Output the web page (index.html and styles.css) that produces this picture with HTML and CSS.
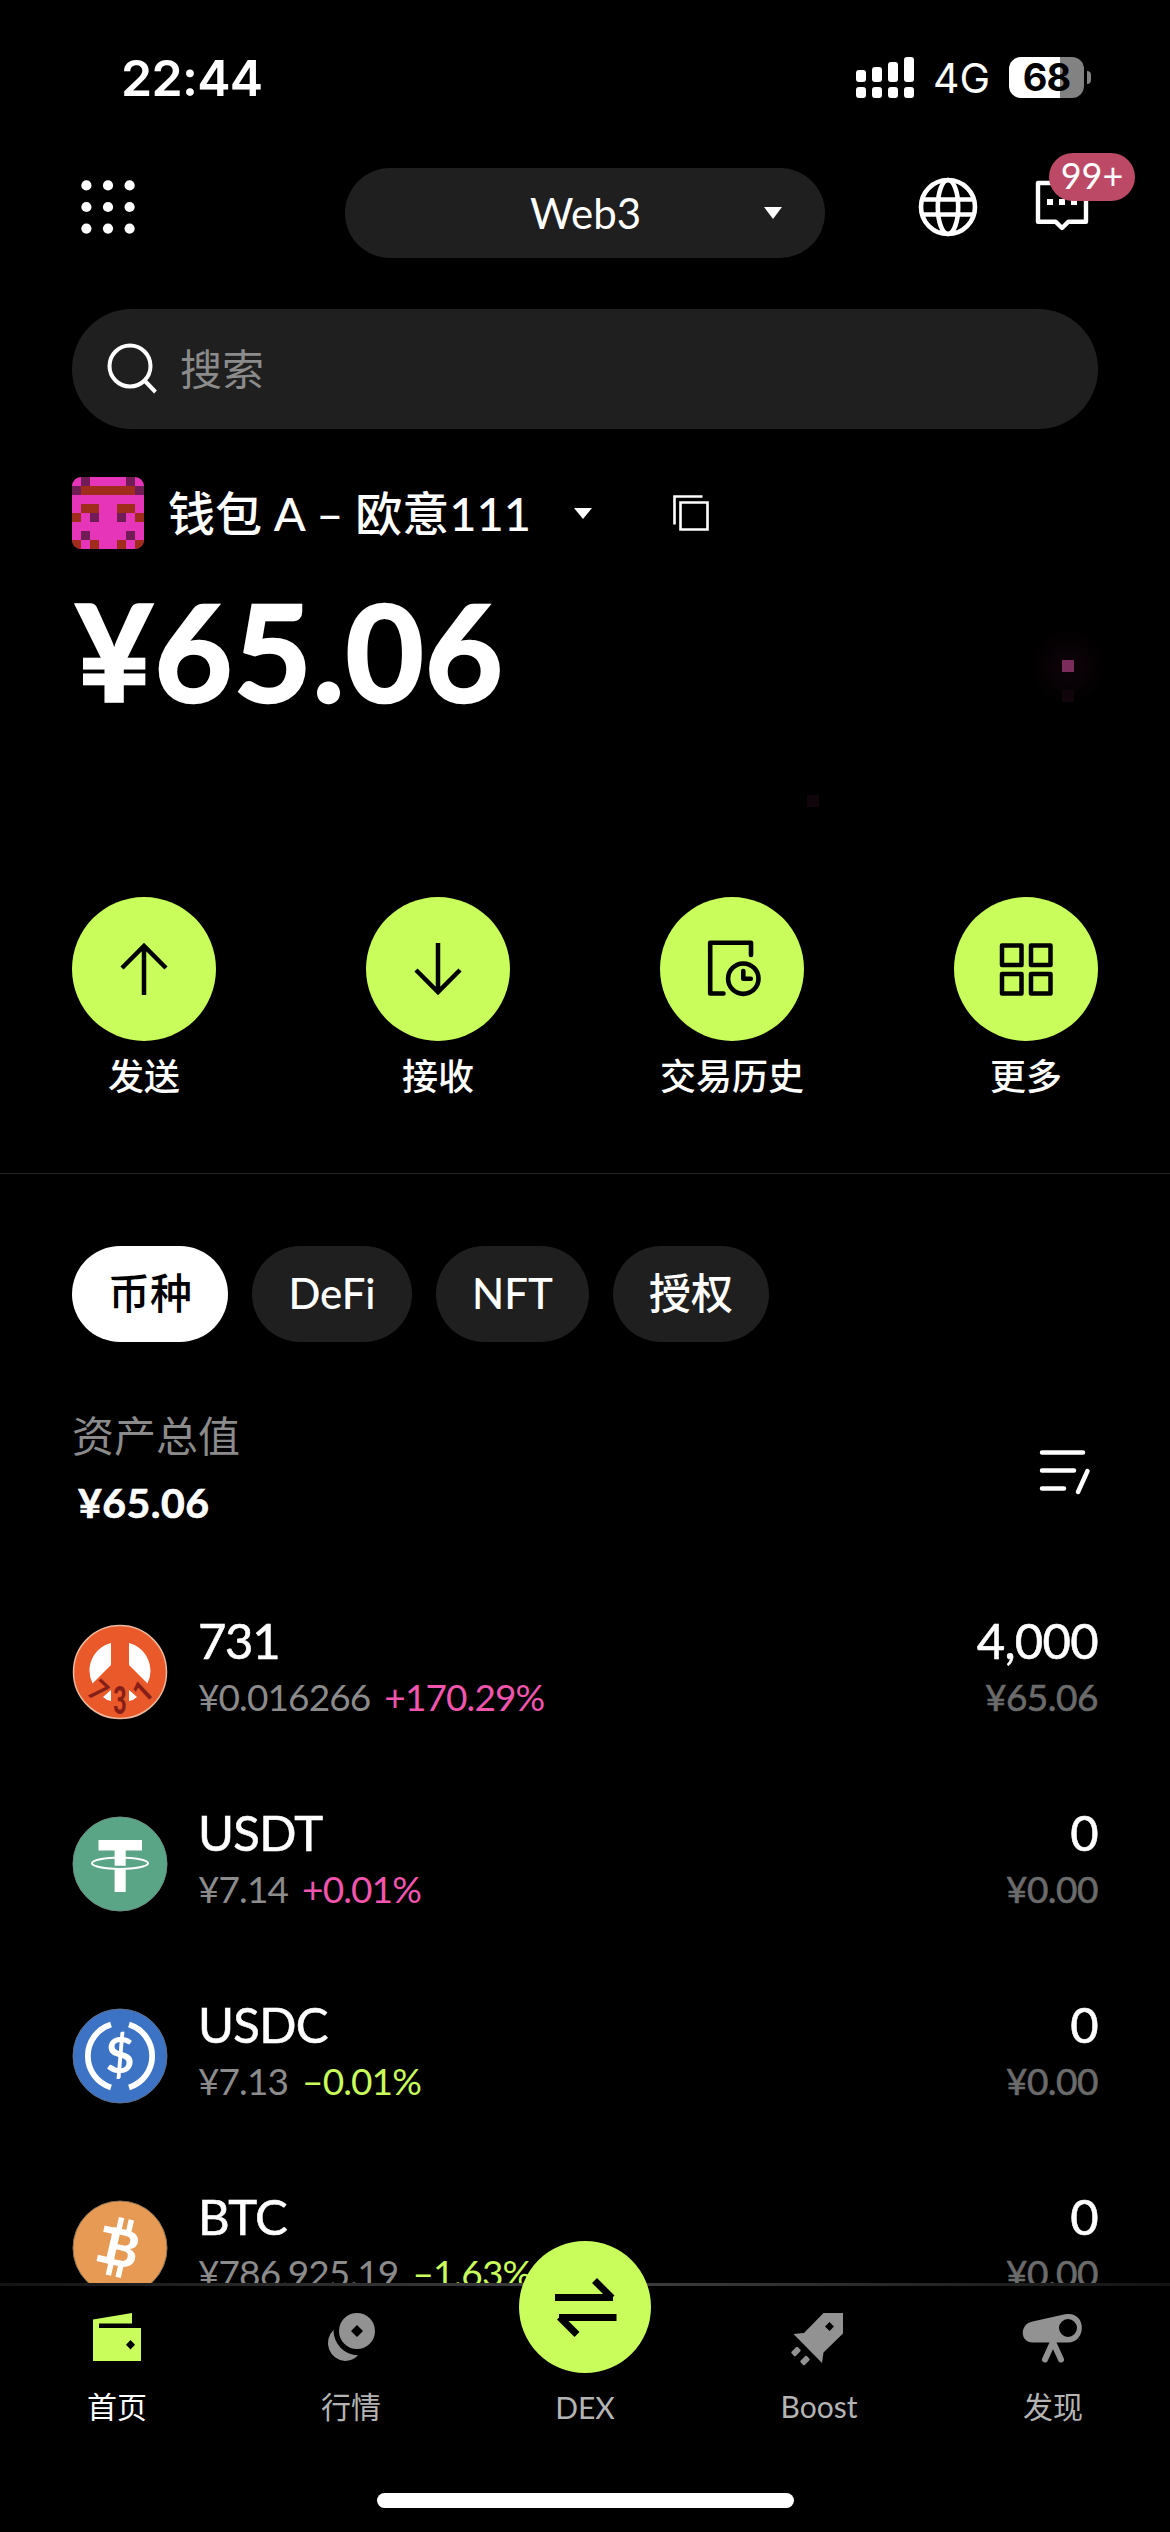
FILE: index.html
```html
<!DOCTYPE html>
<html lang="zh-CN">
<head>
<meta charset="utf-8">
<title>Web3 钱包</title>
<link rel="stylesheet" href="styles.css">
</head>
<body>
<div class="app">
  <main class="screen">
    <div class="status">
      <span class="time">22:44</span>
      <svg class="signal" width="58" height="41" viewBox="0 0 58 41" fill="#fff">
        <rect x="0" y="13" width="10" height="12" rx="3"/><rect x="16" y="10" width="10" height="15" rx="3"/><rect x="32" y="5" width="10" height="20" rx="3"/><rect x="48" y="0" width="10" height="25" rx="3"/>
        <rect x="0" y="30" width="10" height="11" rx="3"/><rect x="16" y="30" width="10" height="11" rx="3"/><rect x="32" y="30" width="10" height="11" rx="3"/><rect x="48" y="30" width="10" height="11" rx="3"/>
      </svg>
      <span class="network">4G</span>
      <span class="battery">68</span>
      <span class="battery-cap"></span>
    </div>

    <header class="header">
      <svg class="icon72" viewBox="0 0 72 72" fill="#fff">
        <circle cx="14.4" cy="14.4" r="5.1"/><circle cx="36" cy="14.4" r="5.1"/><circle cx="57.6" cy="14.4" r="5.1"/>
        <circle cx="14.4" cy="36" r="5.1"/><circle cx="36" cy="36" r="5.1"/><circle cx="57.6" cy="36" r="5.1"/>
        <circle cx="14.4" cy="57.6" r="5.1"/><circle cx="36" cy="57.6" r="5.1"/><circle cx="57.6" cy="57.6" r="5.1"/>
      </svg>
      <div class="network-select">Web3<svg class="pill-caret" width="18" height="12" viewBox="0 0 18 12"><path d="M0 0h18L9 12z" fill="#fff"/></svg></div>
      <svg class="icon72" viewBox="0 0 72 72" fill="none" stroke="#fff" stroke-width="4.6">
        <circle cx="36" cy="36" r="27"/><ellipse cx="36" cy="36" rx="10.2" ry="27"/><path d="M11 28.5h50M11 43.5h50"/>
      </svg>
      <div class="messages">
        <svg class="icon72" viewBox="0 0 72 72">
          <path d="M12 12h48v38.700h-17.500L36 57l-6.500-6.300H12z" fill="none" stroke="#fff" stroke-width="4.400" stroke-linejoin="round"/>
          <path d="M21 28h6v6h-6zM33 28h6v6h-6zM45 28h6v6h-6z" fill="#fff"/>
        </svg>
        <span class="badge">99+</span>
      </div>
    </header>

    <div class="search">
      <svg width="52" height="52" viewBox="0 0 52 52" fill="none" stroke="#fff" stroke-width="4"><circle cx="24" cy="23" r="20.500"/><path d="M38.500 37.500l11 11.500"/></svg>
      <span class="placeholder">搜索</span>
    </div>

    <div class="wallet">
      <svg class="avatar" viewBox="0 0 8 8" shape-rendering="crispEdges">
        <path d="M0 0h8v8H0z" fill="#e635b9"/>
        <path d="M1 1h6v1H1zM1 3h2v1H1zM5 3h2v1H5zM0 4h1v1H0zM7 4h1v1H7zM0 7h1v1H0zM2 7h1v1H2zM5 7h1v1H5zM7 7h1v1H7z" fill="#a02c1b"/>
        <path d="M1 0h1v1H1zM6 0h1v1H6zM0 1h1v1H0zM7 1h1v1H7zM2 4h1v1H2zM5 4h1v1H5zM1 6h1v1H1zM6 6h1v1H6z" fill="#701c55"/>
      </svg>
      <span class="wallet-name">钱包 A – 欧意111</span>
      <svg class="wallet-caret" width="18" height="11" viewBox="0 0 18 11"><path d="M0 0h18L9 11z" fill="#fff"/></svg>
      <svg class="copy" width="36" height="36" viewBox="0 0 36 36" fill="none" stroke="#fff" stroke-width="2.600"><path d="M29.500 1.500H1.500v28"/><path d="M7.500 7.500h27v27h-27z"/></svg>
    </div>

    <section class="balance">
      <div class="amount">¥65.06</div>
      <i class="glow"></i><i class="pixel lit"></i><i class="pixel under"></i><i class="pixel far"></i>
    </section>

    <nav class="actions">
      <div class="action"><span class="disc"><svg width="72" height="72" viewBox="0 0 72 72" fill="none" stroke="#000" stroke-width="4.500"><path d="M36 62V13M14 35L36 13l22 22"/></svg></span>发送</div>
      <div class="action"><span class="disc"><svg width="72" height="72" viewBox="0 0 72 72" fill="none" stroke="#000" stroke-width="4.500"><path d="M36 10v49M14 37l22 22 22-22"/></svg></span>接收</div>
      <div class="action"><span class="disc"><svg width="72" height="72" viewBox="0 0 72 72" fill="none" stroke="#000" stroke-width="4.600" stroke-linejoin="round" stroke-linecap="round"><path d="M55 22V9.800H14.200v50.700H27.500"/><circle cx="47.300" cy="45.700" r="15.200"/><path d="M47.300 38v7.700h7.500"/></svg></span>交易历史</div>
      <div class="action"><span class="disc"><svg width="72" height="72" viewBox="0 0 72 72" fill="none" stroke="#000" stroke-width="4.500" stroke-linejoin="round"><path d="M12 12.500h19.500V32H12zM41 12.500h19.500V32H41zM12 41h19.500v19.500H12zM41 41h19.500v19.500H41z"/></svg></span>更多</div>
    </nav>

    <hr class="divider">

    <nav class="tabs">
      <span class="tab active">币种</span><span class="tab defi">DeFi</span><span class="tab nft">NFT</span><span class="tab">授权</span>
    </nav>

    <section class="summary">
      <div><div class="summary-label">资产总值</div><div class="summary-value">¥65.06</div></div>
      <svg class="filter" width="54" height="48" viewBox="0 0 54 48" stroke="#fff" stroke-width="4.500" stroke-linecap="round"><path d="M5 5.500h41M5 23.500h32M5 41.500h22M50.500 24L41 45"/></svg>
    </section>

    <section class="assets">
      <div class="asset">
        <svg class="coin" viewBox="0 0 96 96">
          <circle cx="48" cy="48" r="46.500" fill="#ea5929" stroke="#eab99f" stroke-width="1.500"/>
          <path d="M39 19v22L20.500 59.500Q17.500 53 17.500 47C17.500 33 27 22 39 19zM57 19v22l18.500 18.500Q78.500 53 78.500 47C78.500 33 69 22 57 19z" fill="#fff"/>
          <path d="M39 66v11q-5-1-8-4zM57 66v11q5-1 8-4z" fill="#fff"/>
          <g class="coin-digits" fill="#861f18" text-anchor="middle"><text transform="translate(19 74.500) rotate(43) scale(.85 1)">7</text><text transform="translate(48 89.500) scale(.78 1.300)">3</text><text transform="translate(78 75) rotate(-43) scale(.9 1)">1</text></g>
        </svg>
        <div class="asset-text"><div class="asset-name tight">731</div><div class="asset-price"><span>¥0.016266</span><span class="up">+170.29%</span></div></div>
        <div class="asset-value"><div class="asset-name">4,000</div><div class="asset-fiat">¥65.06</div></div>
      </div>
      <div class="asset">
        <svg class="coin" viewBox="0 0 96 96">
          <circle cx="48" cy="48" r="47" fill="#5ba587" stroke="#6d8f81" stroke-width="1"/>
          <ellipse cx="48" cy="47.300" rx="28" ry="5.700" fill="none" stroke="#fff" stroke-width="2"/>
          <path d="M26.500 24h43.500v10.500H53.700v15.200H42.600V34.500H26.500zM42.600 53h11.100v23H42.600z" fill="#fff"/>
        </svg>
        <div class="asset-text"><div class="asset-name">USDT</div><div class="asset-price"><span>¥7.14</span><span class="up">+0.01%</span></div></div>
        <div class="asset-value"><div class="asset-name">0</div><div class="asset-fiat">¥0.00</div></div>
      </div>
      <div class="asset">
        <svg class="coin" viewBox="0 0 96 96">
          <circle cx="48" cy="48" r="47" fill="#3d73c4" stroke="#5d6f8c" stroke-width="1"/>
          <path d="M39 16.500a33 33 0 0 0 0 63M57 16.500a33 33 0 0 1 0 63" fill="none" stroke="#fff" stroke-width="5.800"/>
          <text class="dollar" x="48" y="65" text-anchor="middle" fill="#fff">$</text>
        </svg>
        <div class="asset-text"><div class="asset-name">USDC</div><div class="asset-price"><span>¥7.13</span><span class="down">–0.01%</span></div></div>
        <div class="asset-value"><div class="asset-name">0</div><div class="asset-fiat">¥0.00</div></div>
      </div>
      <div class="asset">
        <svg class="coin" viewBox="0 0 96 96">
          <circle cx="48" cy="48" r="47" fill="#e79a53" stroke="#8f7358" stroke-width="1"/>
          <g transform="rotate(13 48 48)" fill="#fff"><text class="bitcoin" x="50" y="66" text-anchor="middle">B</text><path d="M28 29.500h10v6.500H28zM28 59.500h10v6.500H28zM40 18h5.500v13H40zM50 18h5.500v13H50zM40 64h5.500v13H40zM50 64h5.500v13H50z"/></g>
        </svg>
        <div class="asset-text"><div class="asset-name">BTC</div><div class="asset-price"><span>¥786,925.19</span><span class="down">–1.63%</span></div></div>
        <div class="asset-value"><div class="asset-name">0</div><div class="asset-fiat">¥0.00</div></div>
      </div>
    </section>
  </main>

  <footer class="dock">
    <div class="dock-items">
      <div class="dock-item home">
        <svg viewBox="0 0 60 60" fill="#c9fd5b"><path d="M6 12.500L45 6v10.500H12V21h42v33H6zM43.500 33l-4.500 4.700 4.500 4.700 4.500-4.700z" fill-rule="evenodd"/></svg>首页</div>
      <div class="dock-item">
        <svg viewBox="0 0 60 60" fill="#929292"><path d="M36 6a18 18 0 1 1 0 36 18 18 0 0 1 0-36zm0 12l-6 6 6 6 6-6z" fill-rule="evenodd"/><path d="M12.500 23A18 18 0 0 0 24 54a18 18 0 0 0 13-5.700A25 25 0 0 1 12.500 23z"/></svg>行情</div>
      <div class="dock-item">
        <span class="dex"><svg width="66" height="66" viewBox="0 0 66 66" fill="none" stroke="#000" stroke-width="7"><path d="M3 23.500h58M42.500 6.500L60 24"/><path d="M64.500 43.500H7M25 60.500L7.500 43"/></svg></span>DEX</div>
      <div class="dock-item">
        <svg viewBox="0 0 60 60" fill="#929292"><path d="M34.500 6H54v20.500L34.500 45.500 33 56 4.500 27l10.500-1zM40.500 15L36 19.500l4.500 4.500 4.500-4.500z" fill-rule="evenodd"/><rect x="-4.500" y="-3" width="9" height="6" rx="1.500" transform="translate(7 44.500) rotate(-45)"/><rect x="-4.500" y="-3" width="9" height="6" rx="1.500" transform="translate(16 53.500) rotate(-45)"/></svg>Boost</div>
      <div class="dock-item">
        <svg viewBox="0 0 60 60" fill="#929292"><path d="M9.500 14.500L42 7.300C64 3.500 64 35.500 45 35.500H10C-3.500 35.500-3.500 17 9.500 14.500zM45 12a9 9 0 1 0 0 18 9 9 0 0 0 0-18z" fill-rule="evenodd"/><path d="M30 35l-8 17.500M30 35l8 17.500" fill="none" stroke="#929292" stroke-width="6" stroke-linecap="round"/></svg>发现</div>
    </div>
    <div class="home-bar"></div>
  </footer>
</div>
</body>
</html>
```
FILE: styles.css
```css
* { box-sizing: border-box; }
body {
  margin: 0;
  background: #000;
  color: #fff;
  font-family: Lato, "Noto Sans CJK SC", sans-serif;
}
svg { display: block; flex: none; overflow: visible; }
.app { width: 1170px; height: 2532px; display: flex; flex-direction: column; }
.screen { flex: 1; min-height: 0; overflow: hidden; }

.status {
  height: 155px;
  padding-left: 121px;
  display: flex;
  align-items: center;
  font-family: Inter, sans-serif;
}
.time { width: 735px; font-size: 50px; font-weight: 600; letter-spacing: -.7px; }
.network { width: 95px; padding-left: 19px; font-size: 41px; }
.battery {
  width: 75px;
  height: 41px;
  border-radius: 12px;
  background: linear-gradient(90deg, #fff 51px, #828282 51px);
  color: #000;
  font-size: 38px;
  font-weight: 700;
  line-height: 41px;
  text-align: center;
  letter-spacing: -1px;
}
.battery-cap { width: 4px; height: 13px; margin-left: 3px; border-radius: 0 4px 4px 0; background: #828282; }

.header { height: 154px; padding: 13px 72px 0; display: flex; align-items: flex-start; }
.icon72 { width: 72px; height: 72px; margin-top: 3px; }
.network-select {
  width: 480px;
  height: 90px;
  margin: 0 87px 0 201px;
  padding: 0 43px 0 185px;
  display: flex;
  align-items: center;
  justify-content: space-between;
  border-radius: 45px;
  background: #1f1f1f;
  font-size: 42px;
  line-height: 88px;
}
.messages { position: relative; margin-left: 42px; }
.badge {
  position: absolute;
  left: 23px;
  top: -15px;
  width: 86px;
  height: 48px;
  border-radius: 24px;
  background: #bc4a66;
  font-size: 36px;
  line-height: 45px;
  text-align: center;
}

.search {
  height: 120px;
  margin: 0 72px;
  padding-left: 34px;
  display: flex;
  align-items: center;
  gap: 22px;
  border-radius: 60px;
  background: #1f1f1f;
  color: #8b8b8b;
  font-size: 42px;
}
.placeholder { line-height: 50px; }

.wallet { height: 72px; margin: 48px 72px 0; display: flex; align-items: center; }
.avatar { width: 72px; height: 72px; border-radius: 9px; overflow: hidden; }
.wallet-name { width: 382px; margin-left: 24px; font-size: 47px; font-weight: 500; line-height: 72px; white-space: nowrap; }
.wallet-caret { margin-left: 24px; }
.copy { margin-left: 81px; }

.balance { position: relative; height: 120px; margin: 41px 72px 0; }
.amount { padding-left: 3px; font-size: 135px; font-weight: 700; line-height: 120px; letter-spacing: .9px; -webkit-text-stroke: 2.500px #fff; }
.pixel { position: absolute; width: 12px; height: 12px; background: #11050c; }
.lit { left: 990px; top: 70px; background: #7b2c5a; }
.under { left: 990px; top: 100px; }
.far { left: 735px; top: 205px; }
.glow { position: absolute; left: 948px; top: 28px; width: 96px; height: 96px; background: radial-gradient(circle, #0e0309, transparent 60%); }

.actions { margin: 187px 72px 0; display: flex; justify-content: space-between; }
.action { width: 144px; font-size: 36px; font-weight: 500; line-height: 50px; text-align: center; white-space: nowrap; }
.disc {
  width: 144px;
  height: 144px;
  margin-bottom: 10px;
  display: flex;
  align-items: center;
  justify-content: center;
  border-radius: 50%;
  background: #c9fd5b;
}
.divider { height: 1px; margin: 72px 0; border: 0; background: #242424; }

.tabs { display: flex; gap: 24px; padding: 0 72px; }
.tab {
  width: 156px;
  height: 96px;
  border-radius: 48px;
  background: #1f1f1f;
  font-size: 42px;
  font-weight: 500;
  line-height: 94px;
  text-align: center;
}
.defi { width: 160px; }
.nft { width: 153px; }
.active { background: #fff; color: #000; }

.summary { height: 213px; margin: 69px 72px 0; display: flex; justify-content: space-between; }
.summary-label { color: #8b8b8b; font-size: 42px; line-height: 50px; }
.summary-value { margin-top: 17px; padding-left: 6px; font-size: 41px; font-weight: 700; line-height: 50px; letter-spacing: .5px; -webkit-text-stroke: .7px #fff; }
.filter { margin: 36px 7px 0 0; }

.assets { padding: 0 72px; display: flex; flex-direction: column; gap: 96px; }
.asset { height: 96px; display: flex; align-items: flex-start; gap: 30px; }
.coin { width: 96px; height: 96px; }
.coin-digits { font: 700 30px Roboto, sans-serif; }
.dollar { font: 700 50px Lato, sans-serif; }
.bitcoin { font: 900 51px Lato, sans-serif; }
.asset-text { flex: 1; margin-top: -12px; }
.asset-value { margin-top: -12px; text-align: right; letter-spacing: -.4px; }
.asset-name { height: 56px; font-size: 49px; line-height: 56px; letter-spacing: -.7px; -webkit-text-stroke: .6px #fff; }
.tight { letter-spacing: -1.300px; }
.asset-price { display: flex; gap: 14px; color: #8b8b8b; font-size: 37px; line-height: 58px; letter-spacing: -.9px; }
.asset-fiat { color: #6b6b6b; font-size: 37px; line-height: 58px; letter-spacing: -.5px; -webkit-text-stroke: .6px #6b6b6b; }
.up { color: #f155ad; }
.down { color: #c9fd5b; }

.dock { flex: none; height: 249px; background: linear-gradient(90deg, #131313, #3c3c3c 45%, #3c3c3c 55%, #131313) top / 100% 3px no-repeat #000; }
.dock-items { display: flex; }
.dock-item { width: 234px; height: 210px; display: flex; flex-direction: column; align-items: center; color: #b4b4b4; font-size: 30px; line-height: 40px; }
.dock-item > svg { width: 60px; height: 60px; margin: 24px 0 19px; }
.home { color: #fff; }
.dex {
  flex: none;
  width: 132px;
  height: 132px;
  margin: -42px 0 14px;
  display: flex;
  align-items: center;
  justify-content: center;
  border-radius: 50%;
  background: #c9fd5b;
  z-index: 1;
}
.home-bar { width: 417px; height: 15px; margin: 0 auto; border-radius: 8px; background: #fff; }
```
